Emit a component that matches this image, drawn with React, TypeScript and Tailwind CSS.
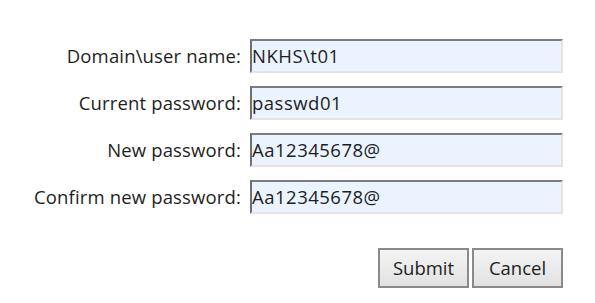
import React from "react";

const rows = [
  { label: "Domain\\user name:", value: "NKHS\\t01" },
  { label: "Current password:", value: "passwd01" },
  { label: "New password:", value: "Aa12345678@" },
  { label: "Confirm new password:", value: "Aa12345678@" },
];

function Btn({ children }: { children: React.ReactNode }) {
  return (
    <div className="flex h-[40px] w-[91px] items-center justify-center border-2 border-[#8a8a8a] bg-gradient-to-b from-[#f4f4f4] to-[#e2e2e2] text-[#1e1e1e]">
      {children}
    </div>
  );
}

export default function App() {
  return (
    <div
      className="h-[303px] w-[595px] bg-white text-[18.5px] text-[#1e1e1e]"
      style={{ fontFamily: '"Open Sans", "Noto Sans", sans-serif' }}
    >
      <div className="flex flex-col items-end pr-[32px] pt-[39px]">
        <div className="grid grid-cols-[auto_313px] items-center gap-x-[9px] gap-y-[13px]">
          {rows.map((r) => (
            <React.Fragment key={r.label}>
              <div className="text-right leading-none tracking-[0.15px]">{r.label}</div>
              <div className="flex h-[34px] items-center border-2 border-b-[#e4e4e4] border-l-[#6f6f6f] border-r-[#e4e4e4] border-t-[#7c7c7c] bg-[#eaf3fe] pl-0 leading-none tracking-[0.5px]">
                {r.value}
              </div>
            </React.Fragment>
          ))}
        </div>
        <div className="mt-[34px] flex gap-[3px]">
          <Btn>Submit</Btn>
          <Btn>Cancel</Btn>
        </div>
      </div>
    </div>
  );
}
